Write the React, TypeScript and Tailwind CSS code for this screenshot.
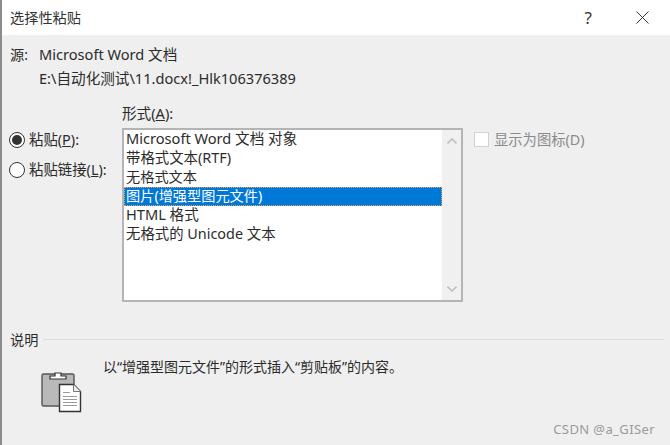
const font = { fontFamily: '"Noto Sans", "Noto Sans CJK SC", sans-serif' }

const formats = [
  { label: 'Microsoft Word 文档 对象', size: 'text-[14.6px]' },
  { label: '带格式文本(RTF)', size: 'text-[14.4px]' },
  { label: '无格式文本', size: 'text-[14.2px]' },
  { label: '图片(增强型图元文件)', size: 'text-[14.2px]' },
  { label: 'HTML 格式', size: 'text-[14.6px]' },
  { label: '无格式的 Unicode 文本', size: 'text-[14.4px]' },
]

function Radio({ checked }: { checked?: boolean }) {
  return (
    <span className="flex h-[16px] w-[16px] shrink-0 items-center justify-center rounded-full border border-[#333] bg-white">
      {checked && <span className="h-[10px] w-[10px] rounded-full bg-[#333]" />}
    </span>
  )
}

function ClipboardIcon() {
  return (
    <svg width="42" height="44" viewBox="0 0 42 44" className="shrink-0">
      <rect x="1" y="5" width="32" height="32" rx="1.5" fill="#b9b9b9" stroke="#555" strokeWidth="1.4" />
      <path d="M9 10V7h5V4h6v3h5v3z" fill="#fff" stroke="#333" strokeWidth="1.2" />
      <path d="M18.5 15.5h14l7 7v20h-21z" fill="#fff" stroke="#333" strokeWidth="1.4" />
      <path d="M32.5 15.5v7h7" fill="#eee" stroke="#777" strokeWidth="1" />
      <path d="M22 23.5h7M22 27.5h14M22 30.5h14M22 33.5h14M22 36.5h14" stroke="#999" strokeWidth="1.1" />
    </svg>
  )
}

export default function App() {
  return (
    <div style={font} className="relative flex h-[445px] w-[670px] flex-col overflow-hidden border-l-2 border-[#8c8c8c] bg-[#efefef] text-[14.6px] leading-[19px] text-[#2b2b2b]">
      {/* Title bar */}
      <div className="flex h-[35px] shrink-0 items-center justify-between bg-white pl-2 pr-[21px]">
        <span className="text-[14.2px] leading-[17px] text-[#333]">选择性粘贴</span>
        <div className="flex items-center gap-[44px]">
          <span className="text-[17px] text-[#333]">?</span>
          <svg width="13" height="13" viewBox="0 0 13 13">
            <path d="M.5.5l12 12M12.5.5l-12 12" stroke="#333" strokeWidth="1" fill="none" />
          </svg>
        </div>
      </div>

      {/* Source */}
      <div className="mt-[10px] flex pl-2">
        <span className="w-[29px] text-[14.2px]">源:</span>
        <div className="flex flex-col gap-[5px]">
          <span>Microsoft Word 文档</span>
          <span>E:\自动化测试\11.docx!_Hlk106376389</span>
        </div>
      </div>

      {/* Format chooser */}
      <div className="mt-[16px] flex">
        <div className="mt-[26px] flex w-[120px] flex-col gap-[11px] pl-[7px] text-[14.4px]">
          <label className="flex items-center gap-[4px]">
            <Radio checked />
            <span>粘贴(<span className="underline">P</span>):</span>
          </label>
          <label className="flex items-center gap-[4px]">
            <Radio />
            <span>粘贴链接(<span className="underline">L</span>):</span>
          </label>
        </div>
        <div className="flex flex-col">
          <span className="mb-[5px]">形式(<span className="underline">A</span>):</span>
          <div className="flex h-[174px] w-[341px] border-2 border-[#b4b4b8] bg-white">
            <ul className="flex-1">
              {formats.map((f, i) => (
                <li
                  key={f.label}
                  className={
                    i === 3
                      ? `h-[19px] bg-[#0078d7] pl-[2px] leading-[17px] text-white outline-1 -outline-offset-1 outline-dotted outline-[#e8a060] ${f.size}`
                      : `h-[19px] pl-[2px] leading-[17px] ${f.size}`
                  }
                >
                  {f.label}
                </li>
              ))}
            </ul>
            <div className="flex w-[19px] flex-col items-center justify-between bg-[#f0f0f0] py-[8px]">
              <svg width="10" height="6" viewBox="0 0 10 6"><path d="M.5 5.5L5 1l4.5 4.5" stroke="#c0c0c0" strokeWidth="1.6" fill="none" /></svg>
              <svg width="10" height="6" viewBox="0 0 10 6"><path d="M.5.5L5 5l4.5-4.5" stroke="#c0c0c0" strokeWidth="1.6" fill="none" /></svg>
            </div>
          </div>
        </div>
        <div className="ml-[11px] mt-[26px] flex h-[19px] items-center gap-[5px] text-[14.3px] text-[#8a8a8a]">
          <span className="h-[15px] w-[15px] border border-[#d2d2d2] bg-white" />
          <span>显示为图标(D)</span>
        </div>
      </div>

      {/* Description */}
      <div className="mt-[28px] flex items-center gap-[5px] pl-2 pr-[6px] text-[14.2px]">
        <span>说明</span>
        <div className="h-px flex-1 bg-[#dcdcdc]" />
      </div>
      <div className="mt-[8px] flex pl-[39px]">
        <div className="mt-[12px]"><ClipboardIcon /></div>
        <span className="ml-[20px] text-[14px]">以“增强型图元文件”的形式插入“剪贴板”的内容。</span>
      </div>

      {/* Watermark */}
      <span className="absolute bottom-[8px] right-[15px] text-[13px] leading-[16px] tracking-[0.4px] text-[#9a9a9a]">CSDN @a_GISer</span>
    </div>
  )
}
